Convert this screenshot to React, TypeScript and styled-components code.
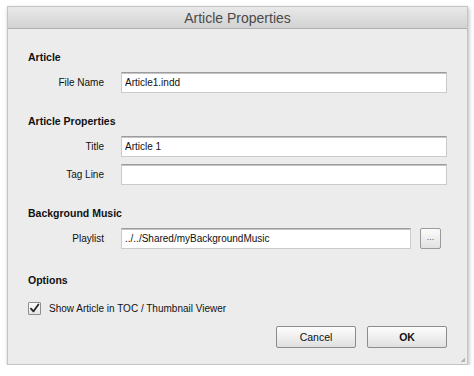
import React, { useState } from 'react'
import styled, { createGlobalStyle } from 'styled-components'

const GlobalStyle = createGlobalStyle`
  html, body {
    margin: 0;
    padding: 0;
    background: #ffffff;
  }
  body {
    font-family: "Liberation Sans", Arial, sans-serif;
    font-size: 10px;
    color: #111;
  }
`

export default function App() {
  const [showInToc, setShowInToc] = useState(true)

  return (
    <>
      <GlobalStyle />
      <Page>
        <Dialog>
          <TitleBar>Article Properties</TitleBar>

          <Body>
            <Section>
              <SectionTitle>Article</SectionTitle>
              <Row>
                <Label>File Name</Label>
                <TextInput defaultValue="Article1.indd" />
              </Row>
            </Section>

            <Section top={21}>
              <SectionTitle>Article Properties</SectionTitle>
              <Row>
                <Label>Title</Label>
                <TextInput defaultValue="Article 1" />
              </Row>
              <Row>
                <Label>Tag Line</Label>
                <TextInput defaultValue="" />
              </Row>
            </Section>

            <Section top={21}>
              <SectionTitle>Background Music</SectionTitle>
              <Row>
                <Label>Playlist</Label>
                <TextInput defaultValue="../../Shared/myBackgroundMusic" />
                <BrowseButton type="button">...</BrowseButton>
              </Row>
            </Section>

            <Section top={24}>
              <SectionTitle>Options</SectionTitle>
              <CheckRow onClick={() => setShowInToc(!showInToc)}>
                <CheckBox>
                  {showInToc && (
                    <svg width="11" height="11" viewBox="0 0 11 11">
                      <path d="M2 5.6 L4.4 8.4 L9.4 1.4" fill="none" stroke="#2a2a2a" strokeWidth="1.8" strokeLinecap="round" strokeLinejoin="round" />
                    </svg>
                  )}
                </CheckBox>
                <span>Show Article in TOC / Thumbnail Viewer</span>
              </CheckRow>
            </Section>

            <Footer>
              <PushButton type="button">Cancel</PushButton>
              <PushButton type="button" primary>
                OK
              </PushButton>
            </Footer>
          </Body>
          <Grip />
        </Dialog>
      </Page>
    </>
  )
}

const Page = styled.div`
  padding: 6px 0 0 7px;
`

const Dialog = styled.div`
  position: relative;
  width: 461px;
  height: 359px;
  box-sizing: border-box;
  display: flex;
  flex-direction: column;
  background: #ececec;
  border: 1px solid #c4c4c4;
  box-shadow: 1px 2px 4px rgba(0, 0, 0, 0.28);
`

const TitleBar = styled.div`
  height: 21px;
  flex: none;
  display: flex;
  align-items: center;
  justify-content: center;
  background: linear-gradient(#e9e9e9, #d2d2d2);
  border-bottom: 1px solid #b0b0b0;
  font-size: 14px;
  color: #4a4a4a;
`

const Body = styled.div`
  flex: 1;
  display: flex;
  flex-direction: column;
  padding: 21px 20px 0 20px;
`

const Section = styled.div<{ top?: number }>`
  display: flex;
  flex-direction: column;
  gap: 7px;
  margin-top: ${(p) => p.top ?? 0}px;
`

const SectionTitle = styled.div`
  font-weight: bold;
  font-size: 10.5px;
  line-height: 14px;
  margin-bottom: 1px;
  color: #111;
`

const Row = styled.div`
  display: flex;
  align-items: center;
  height: 21px;
`

const Label = styled.label`
  width: 76px;
  flex: none;
  text-align: right;
  margin-right: 17px;
  color: #111;
`

const TextInput = styled.input`
  flex: 1;
  min-width: 0;
  height: 21px;
  box-sizing: border-box;
  padding: 0 3px;
  background: #fff;
  border: 1px solid #cbcbcb;
  border-top-color: #9c9c9c;
  box-shadow: inset 0 1px 0 #c4c4c4;
  font-family: "Liberation Sans", Arial, sans-serif;
  font-size: 10px;
  color: #111;
  outline: none;
`

const BrowseButton = styled.button`
  flex: none;
  width: 21px;
  height: 21px;
  margin: 0 6px 0 9px;
  padding: 0 0 4px;
  box-sizing: border-box;
  border: 1px solid #9a9a9a;
  border-radius: 2px;
  background: linear-gradient(#fbfbfb, #e2e2e2);
  font-family: "Liberation Sans", Arial, sans-serif;
  font-size: 9px;
  color: #555;
`

const CheckRow = styled.div`
  display: flex;
  align-items: center;
  height: 14px;
  margin-top: 6px;
  gap: 8px;
  cursor: default;
`

const CheckBox = styled.div`
  width: 13px;
  height: 13px;
  box-sizing: border-box;
  display: flex;
  align-items: center;
  justify-content: center;
  border: 1px solid #8e8e8e;
  border-radius: 1px;
  background: linear-gradient(#ffffff, #e4e4e4);
`

const Footer = styled.div`
  display: flex;
  justify-content: flex-end;
  gap: 11px;
  margin-top: 11px;
`

const PushButton = styled.button<{ primary?: boolean }>`
  width: 80px;
  height: 22px;
  box-sizing: border-box;
  border: 1px solid #8c8c8c;
  border-radius: 2px;
  background: linear-gradient(#fdfdfd, #e0e0e0);
  font-family: "Liberation Sans", Arial, sans-serif;
  font-size: 10.5px;
  font-weight: ${(p) => (p.primary ? 'bold' : 'normal')};
  color: #111;
`

const Grip = styled.div`
  position: absolute;
  right: 2px;
  bottom: 2px;
  width: 4px;
  height: 4px;
  background: linear-gradient(135deg, transparent 50%, #b5b5b5 50%);
`
